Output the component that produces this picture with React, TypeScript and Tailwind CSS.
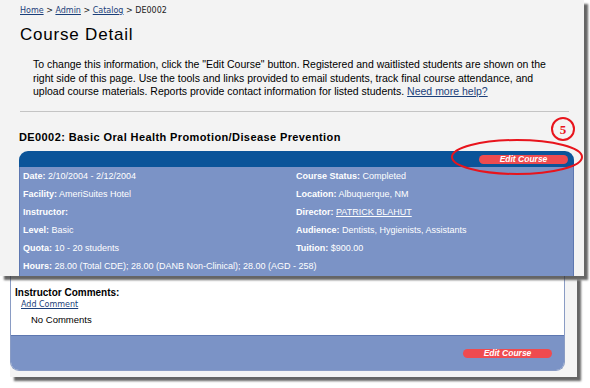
export default function App() {
    const rows: [string, React.ReactNode, string, React.ReactNode][] = [
        ["Date:", "2/10/2004 - 2/12/2004", "Course Status:", "Completed"],
        ["Facility:", "AmeriSuites Hotel", "Location:", "Albuquerque, NM"],
        ["Instructor:", "", "Director:", <a className="underline">PATRICK BLAHUT</a>],
        ["Level:", "Basic", "Audience:", "Dentists, Hygienists, Assistants"],
        ["Quota:", "10 - 20 students", "Tuition:", "$900.00"],
    ];

    return (
        <div className="w-[590px] h-[388px] bg-white overflow-hidden font-['Liberation_Sans',Arial,sans-serif] text-black">
            {/* top panel */}
            <div className="relative z-10 w-[584px] h-[276px] bg-[#f3f3f3] shadow-[4px_4px_2px_rgba(50,50,50,0.75)] overflow-hidden">
                <div className="pl-[20px] pt-[5px] text-[8px] font-['DejaVu_Sans',sans-serif] text-[#222]">
                    <a className="underline text-[#1b3f7a]">Home</a> &gt; <a className="underline text-[#1b3f7a]">Admin</a> &gt;{" "}
                    <a className="underline text-[#1b3f7a]">Catalog</a> &gt; DE0002
                </div>
                <h1 className="pl-[20px] mt-[8px] text-[17px] leading-[20px] tracking-[0.8px]">Course Detail</h1>
                <p className="pl-[33px] mt-[13px] text-[10.5px] leading-[13.5px] whitespace-nowrap">
                    To change this information, click the "Edit Course" button. Registered and waitlisted students are shown on the
                    <br />
                    right side of this page. Use the tools and links provided to email students, track final course attendance, and
                    <br />
                    upload course materials. Reports provide contact information for listed students.{" "}
                    <a className="underline text-[#1b3f7a]">Need more help?</a>
                </p>
                <div className="ml-[20px] mr-[15px] mt-[12px] border-t border-[#c4c4c4]" />
                <div className="relative">
                    <h2 className="pl-[19px] mt-[17px] text-[11px] font-bold tracking-[0.4px]">
                        DE0002: Basic Oral Health Promotion/Disease Prevention
                    </h2>
                    <div className="ml-[19px] mr-[10px] mt-[6px]">
                        <div className="h-[16px] bg-[#0b5499] rounded-t-[9px] flex items-center justify-end pr-[6px]">
                            <button className="w-[89px] h-[9px] rounded-full bg-[#ef4b4f] text-white text-[8.5px] leading-[9px] font-bold italic">
                                Edit Course
                            </button>
                        </div>
                        <div className="bg-[#7b93c6] border-x border-[#5d77b0] text-white text-[9px] pt-[1px] pb-[4px]">
                            {rows.map(([l1, v1, l2, v2], i) => (
                                <div key={i} className="flex h-[18px] items-center">
                                    <div className="w-[276px] pl-[3px]">
                                        <b>{l1}</b> {v1}
                                    </div>
                                    <div>
                                        <b>{l2}</b> {v2}
                                    </div>
                                </div>
                            ))}
                            <div className="flex h-[18px] items-center pl-[3px]">
                                <b>Hours:</b>&nbsp;28.00 (Total CDE); 28.00 (DANB Non-Clinical); 28.00 (AGD - 258)
                            </div>
                        </div>
                    </div>
                    {/* annotation */}
                    <svg className="absolute left-[440px] top-[-12px]" width="150" height="70" viewBox="0 0 150 70">
                        <ellipse cx="77" cy="40" rx="65" ry="17" fill="none" stroke="#e8141c" strokeWidth="2" />
                        <circle cx="123" cy="12" r="11" fill="#f3f3f3" stroke="#e8141c" strokeWidth="2" />
                        <text x="123" y="17" textAnchor="middle" fontSize="13" fontWeight="bold" fill="#e8141c" fontFamily="Liberation Serif, serif">5</text>
                    </svg>
                </div>
            </div>

            {/* lower panel */}
            <div className="ml-[10px] w-[567px] h-[101px] bg-[#f4f4f4] shadow-[4px_4px_2px_rgba(50,50,50,0.75)] pr-[12px] pb-[6px]">
                <div className="h-full border border-[#8a9cc4] border-t-0 rounded-b-[9px] overflow-hidden flex flex-col">
                    <div className="bg-white h-[59px] pl-[4px] pt-[11px]">
                        <div className="text-[10px] font-bold leading-[12px]">Instructor Comments:</div>
                        <a className="block ml-[6px] text-[8px] font-['DejaVu_Sans',sans-serif] underline text-[#1b3f7a] leading-[11px]">Add Comment</a>
                        <div className="ml-[16px] mt-[3px] text-[9.5px]">No Comments</div>
                    </div>
                    <div className="flex-1 bg-[#7b93c6] border-t border-[#5d77b0] flex items-center justify-end pr-[12px]">
                        <button className="w-[89px] h-[9px] rounded-full bg-[#ef4b4f] text-white text-[8.5px] leading-[9px] font-bold italic">
                            Edit Course
                        </button>
                    </div>
                </div>
            </div>
        </div>
    );
}
